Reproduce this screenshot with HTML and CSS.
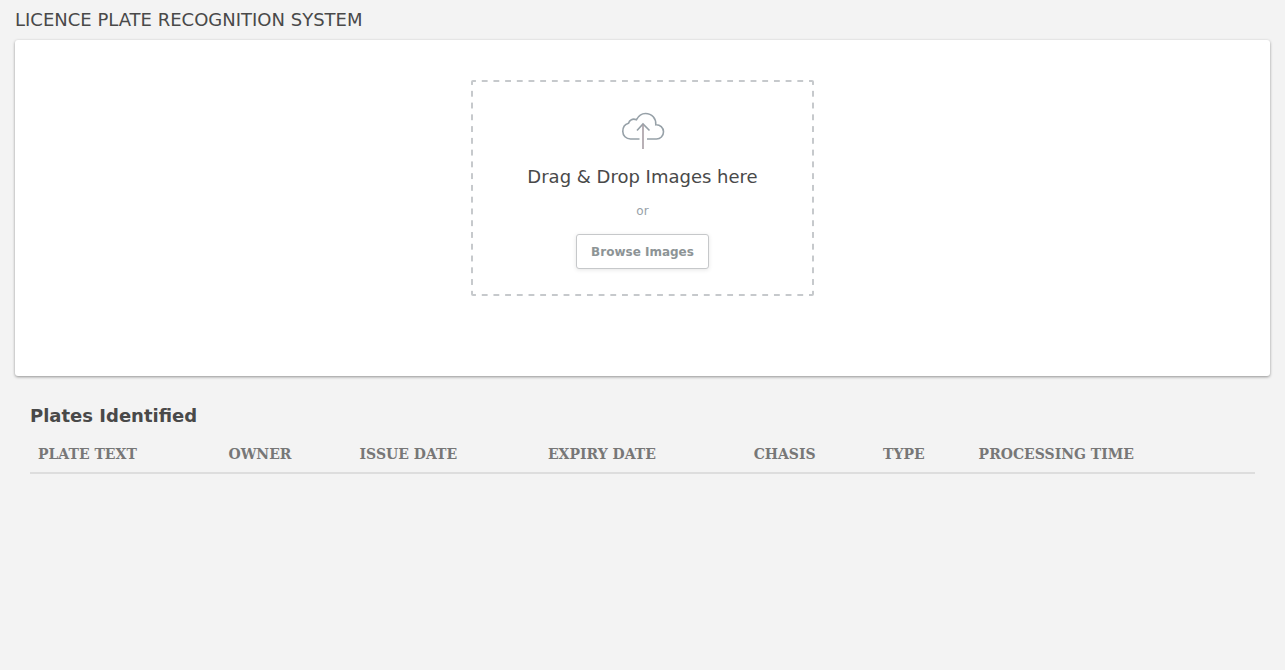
FILE: index.html
```html
<!DOCTYPE html>
<html lang="en">
<head>
<meta charset="utf-8">
<meta name="viewport" content="width=device-width, initial-scale=1">
<title>Licence Plate Recognition System</title>
<link rel="stylesheet" href="styles.css">
</head>
<body>
<main class="page">
  <h1 class="page-title">LICENCE PLATE RECOGNITION SYSTEM</h1>
  <section class="card">
    <div class="dropzone">
      <svg class="cloud" viewBox="0 0 44 38" fill="none" aria-hidden="true">
        <path stroke="#97a1a8" stroke-width="1.6" d="M18.500 27H9.500C5 27 1.800 23.500 1.800 19.500C1.800 15.500 4 12.200 7.500 11.300C8.500 7.800 11.500 6.300 15.500 7.700C17.500 3.700 20.800 1.500 24.500 1.500C31 1.500 35.200 6.500 34.800 12.800C39 12.500 42.500 15.800 42.500 19.800C42.500 24 39.300 27 35.500 27H26"/>
        <path stroke="#97a1a8" stroke-width="1.6" d="M16 18.500L22 12L28.500 18.500"/>
        <path stroke="#a79da4" stroke-width="1.6" d="M22 37V12.500"/>
      </svg>
      <h2 class="drop-title">Drag &amp; Drop Images here</h2>
      <span class="or">or</span>
      <button class="browse" type="button">Browse Images</button>
    </div>
  </section>
  <section class="results">
    <h2 class="results-title">Plates Identified</h2>
    <table class="plates">
      <thead>
        <tr>
          <th scope="col">PLATE TEXT</th>
          <th scope="col">OWNER</th>
          <th scope="col">ISSUE DATE</th>
          <th scope="col">EXPIRY DATE</th>
          <th scope="col">CHASIS</th>
          <th scope="col">TYPE</th>
          <th scope="col">PROCESSING TIME</th>
        </tr>
      </thead>
    </table>
  </section>
</main>
</body>
</html>
```
FILE: styles.css
```css
* {
  box-sizing: border-box;
}

body {
  margin: 0;
  background: #f3f3f3;
  color: #494949;
  font-family: "DejaVu Sans", sans-serif;
}

.page {
  padding: 0 15px;
}

.page-title {
  margin: 0;
  font-size: 18px;
  font-weight: 400;
  line-height: 40px;
}

.card {
  padding: 40px 15px 80px;
  border-radius: 3px;
  background: #fff;
  box-shadow: 0 1px 3px rgba(0, 0, 0, 0.4);
}

/* The dashed outline is drawn with gradients so dashes and gaps are equal. */
.dropzone {
  --dash: #c6c9cc 0 25%, transparent 25% 75%, #c6c9cc 75%;
  display: flex;
  flex-direction: column;
  align-items: center;
  width: 28%;
  min-width: 280px;
  margin: 0 auto;
  padding: 30px 0 25px;
  border: 2px solid transparent;
  border-radius: 2px;
  background:
    linear-gradient(90deg, var(--dash)) 0 -2px / calc(100% / 29) 2px repeat-x,
    linear-gradient(90deg, var(--dash)) 0 calc(100% + 2px) / calc(100% / 29) 2px repeat-x,
    linear-gradient(var(--dash)) -2px 0 / 2px calc(100% / 18) repeat-y,
    linear-gradient(var(--dash)) calc(100% + 2px) 0 / 2px calc(100% / 18) repeat-y;
}

.cloud {
  width: 44px;
  height: 38px;
}

.drop-title {
  margin: 17px 0 14px;
  font-size: 18px;
  font-weight: 400;
  line-height: 20px;
}

.or {
  margin-bottom: 13px;
  color: #97a1a8;
  font-size: 12px;
  line-height: 20px;
}

.browse {
  padding: 1px 14px 0;
  border: 1px solid #c6c8ca;
  border-radius: 3px;
  background: #fff;
  box-shadow: 0 1px 4px rgba(0, 0, 0, 0.1);
  color: #8d9496;
  font-family: inherit;
  font-size: 12px;
  font-weight: 700;
  line-height: 32px;
}

.results {
  padding: 30px 15px;
}

.results-title {
  margin: 0 0 10px;
  font-size: 18px;
  font-weight: 700;
  line-height: 20px;
}

.plates {
  width: 100%;
  border-collapse: collapse;
}

.plates th {
  padding: 8px;
  border-bottom: 2px solid #ddd;
  color: #777;
  font-family: "DejaVu Serif", serif;
  font-size: 14px;
  font-weight: 700;
  line-height: 20px;
  text-align: left;
}
```
